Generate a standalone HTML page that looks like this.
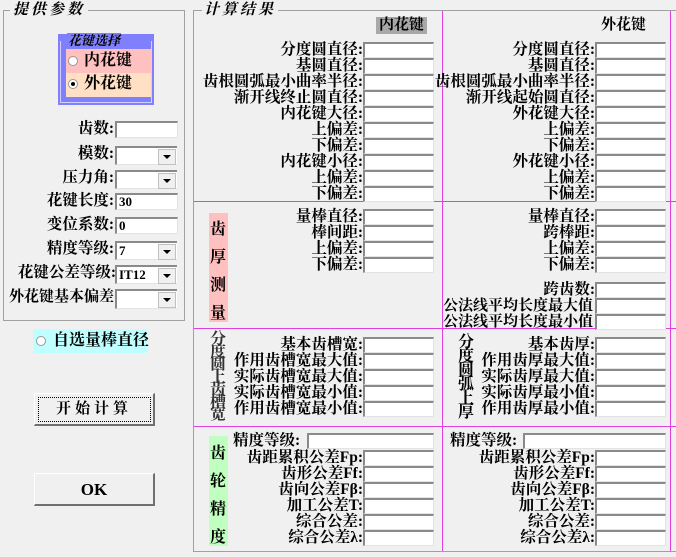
<!DOCTYPE html>
<html><head><meta charset="utf-8"><style>
body{margin:0;width:676px;height:557px;background:#f0f0f0;position:relative;overflow:hidden;font-family:"Liberation Serif","Noto Serif CJK SC","Noto Sans CJK SC",serif;font-weight:bold;font-size:15px;color:#000}
div{position:absolute;box-sizing:border-box}
.l{line-height:16px;white-space:nowrap;text-align:right;font-size:15.5px}
.i{background:#fff;border-top:2px solid #8a8a8a;border-left:2px solid #8a8a8a;border-bottom:1px solid #e3e3e3;border-right:1px solid #e3e3e3;height:16px}
.A{left:363px;width:71px}.B{left:595px;width:71px}
.la{right:313px}.lb{right:81px}
.gb{border:1px solid #a0a0a0}
.mh{height:1px;background:#e040e0}
.cb{background:#fff;border-top:2px solid #8a8a8a;border-left:2px solid #8a8a8a;border-bottom:1px solid #e3e3e3;height:19px;left:115px;width:62px;font-size:13px;line-height:16px;padding-left:2px;font-family:"Liberation Serif",serif}
.cb:after{content:"";position:absolute;right:1px;top:1px;width:16px;height:14px;background:#f0f0f0;border:1px solid #c0c0c0}
.ar{position:absolute;right:6px;top:7px;width:0;height:0;border-left:4px solid transparent;border-right:4px solid transparent;border-top:4px solid #000;z-index:2}
.v{width:20px;text-align:center;font-size:16px}
.btn{background:#f0f0f0;border-top:1px solid #fff;border-left:1px solid #fff;border-right:2px solid #707070;border-bottom:2px solid #707070;text-align:center}
</style></head><body>
<div class="gb" style="left:3px;top:10px;width:182px;height:311px"></div>
<div style="left:10px;top:2px;background:#f0f0f0;padding:0 3px;font-style:italic;font-size:15px;line-height:17px;letter-spacing:3px">提供参数</div>
<div style="left:58px;top:34px;width:96px;height:71px;background:#8080ff"></div>
<div style="left:60px;top:41px;width:92px;height:62px;border:1px solid #d0d0ff;border-top:0"></div>
<div style="left:66px;top:49px;width:85px;height:24px;background:#ffc0c0"></div>
<div style="left:66px;top:73px;width:85px;height:24px;background:#ffe0c4"></div>
<div style="left:67px;top:33px;background:#8080ff;font-style:italic;font-size:13px;line-height:15px;color:#000;padding:0 1px">花键选择</div>
<div style="left:68px;top:56px;width:10px;height:10px;border-radius:50%;background:#fff;border:1px solid #999"></div>
<div style="left:84px;top:52px;font-size:16px;line-height:18px">内花键</div>
<div style="left:68px;top:79px;width:10px;height:10px;border-radius:50%;background:#fff;border:1px solid #999"></div>
<div style="left:71px;top:82px;width:4px;height:4px;border-radius:50%;background:#000"></div>
<div style="left:84px;top:75px;font-size:16px;line-height:18px">外花键</div>

<div class="l" style="right:562px;top:121px">齿数:</div><div class="i" style="left:115px;top:121px;width:63px;height:17px"></div>
<div class="l" style="right:562px;top:146px">模数:</div><div class="cb" style="top:146px"><span class="ar"></span></div>
<div class="l" style="right:562px;top:170px">压力角:</div><div class="cb" style="top:170px"><span class="ar"></span></div>
<div class="l" style="right:562px;top:193px">花键长度:</div><div class="i" style="left:115px;top:193px;width:63px;height:17px;font-size:13px;line-height:14px;padding-left:2px">30</div>
<div class="l" style="right:562px;top:217px">变位系数:</div><div class="i" style="left:115px;top:217px;width:63px;height:17px;font-size:13px;line-height:14px;padding-left:2px">0</div>
<div class="l" style="right:562px;top:241px">精度等级:</div><div class="cb" style="top:241px">7<span class="ar"></span></div>
<div class="l" style="right:560px;top:265px">花键公差等级:</div><div class="cb" style="top:265px">IT12<span class="ar"></span></div>
<div class="l" style="left:9px;top:289px;font-size:15px">外花键基本偏差</div><div class="cb" style="top:289px;height:20px"><span class="ar"></span></div>

<div style="left:33px;top:329px;width:114px;height:24px;background:#c0ffff"></div>
<div style="left:36px;top:336px;width:10px;height:10px;border-radius:50%;background:#fff;border:1px solid #999"></div>
<div style="left:53px;top:332px;font-size:16px;line-height:18px">自选量棒直径</div>
<div class="btn" style="left:34px;top:393px;width:121px;height:33px;line-height:31px;font-size:15px;letter-spacing:4px;outline:1px dotted #000;outline-offset:-5px">开始计算</div>
<div class="btn" style="left:34px;top:473px;width:121px;height:33px;line-height:31px;font-size:17px">OK</div>

<div class="gb" style="left:193px;top:10px;width:490px;height:542px"></div>
<div style="left:202px;top:2px;background:#f0f0f0;padding:0 2px;font-style:italic;font-size:15px;line-height:17px;letter-spacing:3px">计算结果</div>
<div class="mh" style="left:194px;top:201px;width:482px"></div>
<div class="mh" style="left:194px;top:328px;width:482px"></div>
<div class="mh" style="left:194px;top:426px;width:482px"></div>
<div style="left:442px;top:11px;width:1px;height:540px;background:#e040e0"></div>
<div style="left:670px;top:11px;width:1px;height:540px;background:#e040e0"></div>
<div style="left:376px;top:17px;width:51px;height:17px;background:#a8a8a8;text-align:center;line-height:17px">内花键</div>
<div style="left:601px;top:17px;line-height:17px">外花键</div>

<div class="l la" style="top:42px">分度圆直径:</div><div class="i A" style="top:42px"></div>
<div class="l la" style="top:58px">基圆直径:</div><div class="i A" style="top:58px"></div>
<div class="l la" style="top:74px">齿根圆弧最小曲率半径:</div><div class="i A" style="top:74px"></div>
<div class="l la" style="top:90px">渐开线终止圆直径:</div><div class="i A" style="top:90px"></div>
<div class="l la" style="top:106px">内花键大径:</div><div class="i A" style="top:106px"></div>
<div class="l la" style="top:122px">上偏差:</div><div class="i A" style="top:122px"></div>
<div class="l la" style="top:138px">下偏差:</div><div class="i A" style="top:138px"></div>
<div class="l la" style="top:154px">内花键小径:</div><div class="i A" style="top:154px"></div>
<div class="l la" style="top:170px">上偏差:</div><div class="i A" style="top:170px"></div>
<div class="l la" style="top:186px">下偏差:</div><div class="i A" style="top:186px"></div>
<div class="l lb" style="top:42px">分度圆直径:</div><div class="i B" style="top:42px"></div>
<div class="l lb" style="top:58px">基圆直径:</div><div class="i B" style="top:58px"></div>
<div class="l lb" style="top:74px">齿根圆弧最小曲率半径:</div><div class="i B" style="top:74px"></div>
<div class="l lb" style="top:90px">渐开线起始圆直径:</div><div class="i B" style="top:90px"></div>
<div class="l lb" style="top:106px">外花键大径:</div><div class="i B" style="top:106px"></div>
<div class="l lb" style="top:122px">上偏差:</div><div class="i B" style="top:122px"></div>
<div class="l lb" style="top:138px">下偏差:</div><div class="i B" style="top:138px"></div>
<div class="l lb" style="top:154px">外花键小径:</div><div class="i B" style="top:154px"></div>
<div class="l lb" style="top:170px">上偏差:</div><div class="i B" style="top:170px"></div>
<div class="l lb" style="top:186px">下偏差:</div><div class="i B" style="top:186px"></div>

<div style="left:209px;top:213px;width:19px;height:109px;background:#ffc0c0"></div>
<div class="v" style="left:208px;top:216px">齿</div>
<div class="v" style="left:208px;top:244px">厚</div>
<div class="v" style="left:208px;top:272px">测</div>
<div class="v" style="left:208px;top:300px">量</div>
<div class="l la" style="top:209px">量棒直径:</div><div class="i A" style="top:209px"></div>
<div class="l la" style="top:225px">棒间距:</div><div class="i A" style="top:225px"></div>
<div class="l la" style="top:241px">上偏差:</div><div class="i A" style="top:241px"></div>
<div class="l la" style="top:257px">下偏差:</div><div class="i A" style="top:257px"></div>
<div class="l lb" style="top:209px">量棒直径:</div><div class="i B" style="top:209px"></div>
<div class="l lb" style="top:225px">跨棒距:</div><div class="i B" style="top:225px"></div>
<div class="l lb" style="top:241px">上偏差:</div><div class="i B" style="top:241px"></div>
<div class="l lb" style="top:257px">下偏差:</div><div class="i B" style="top:257px"></div>
<div class="l lb" style="top:282px">跨齿数:</div><div class="i B" style="top:282px"></div>
<div class="l" style="left:443px;top:298px;font-size:15px">公法线平均长度最大值</div><div class="i B" style="top:298px"></div>
<div class="l" style="left:443px;top:314px;font-size:15px">公法线平均长度最小值</div><div class="i B" style="top:314px"></div>

<div style="left:208px;top:334px;width:20px;line-height:12.5px;font-size:16px;text-align:center;color:#333">分<br>度<br>圆<br>上<br>齿<br>槽<br>宽</div>
<div class="l la" style="top:337px">基本齿槽宽:</div><div class="i A" style="top:337px"></div>
<div class="l la" style="top:353px">作用齿槽宽最大值:</div><div class="i A" style="top:353px"></div>
<div class="l la" style="top:369px">实际齿槽宽最大值:</div><div class="i A" style="top:369px"></div>
<div class="l la" style="top:385px">实际齿槽宽最小值:</div><div class="i A" style="top:385px"></div>
<div class="l la" style="top:401px">作用齿槽宽最小值:</div><div class="i A" style="top:401px"></div>
<div style="left:456px;top:336px;width:20px;line-height:14px;font-size:16px;text-align:center">分<br>度<br>圆<br>弧<br>上<br>厚</div>
<div class="l lb" style="top:337px">基本齿厚:</div><div class="i B" style="top:337px"></div>
<div class="l lb" style="top:353px">作用齿厚最大值:</div><div class="i B" style="top:353px"></div>
<div class="l lb" style="top:369px">实际齿厚最大值:</div><div class="i B" style="top:369px"></div>
<div class="l lb" style="top:385px">实际齿厚最小值:</div><div class="i B" style="top:385px"></div>
<div class="l lb" style="top:401px">作用齿厚最小值:</div><div class="i B" style="top:401px"></div>

<div style="left:209px;top:436px;width:19px;height:110px;background:#c0ffc0"></div>
<div class="v" style="left:208px;top:440px">齿</div>
<div class="v" style="left:208px;top:468px">轮</div>
<div class="v" style="left:208px;top:496px">精</div>
<div class="v" style="left:208px;top:524px">度</div>
<div class="l" style="left:233px;top:433px">精度等级:</div><div class="i" style="left:307px;top:433px;width:127px"></div>
<div class="l la" style="top:450px">齿距累积公差Fp:</div><div class="i A" style="top:450px"></div>
<div class="l la" style="top:466px">齿形公差Ff:</div><div class="i A" style="top:466px"></div>
<div class="l la" style="top:482px">齿向公差Fβ:</div><div class="i A" style="top:482px"></div>
<div class="l la" style="top:498px">加工公差T:</div><div class="i A" style="top:498px"></div>
<div class="l la" style="top:514px">综合公差:</div><div class="i A" style="top:514px"></div>
<div class="l la" style="top:530px">综合公差λ:</div><div class="i A" style="top:530px"></div>
<div class="l" style="left:450px;top:433px">精度等级:</div><div class="i" style="left:523px;top:433px;width:143px"></div>
<div class="l lb" style="top:450px">齿距累积公差Fp:</div><div class="i B" style="top:450px"></div>
<div class="l lb" style="top:466px">齿形公差Ff:</div><div class="i B" style="top:466px"></div>
<div class="l lb" style="top:482px">齿向公差Fβ:</div><div class="i B" style="top:482px"></div>
<div class="l lb" style="top:498px">加工公差T:</div><div class="i B" style="top:498px"></div>
<div class="l lb" style="top:514px">综合公差:</div><div class="i B" style="top:514px"></div>
<div class="l lb" style="top:530px">综合公差λ:</div><div class="i B" style="top:530px"></div>
</body></html>
